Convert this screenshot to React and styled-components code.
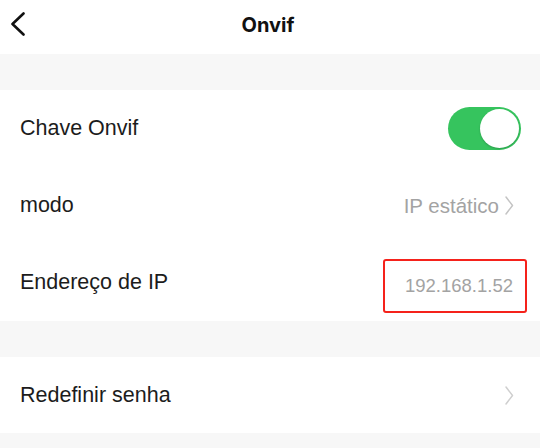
import React from 'react';
import styled, { createGlobalStyle } from 'styled-components';

const GlobalStyle = createGlobalStyle`
  body {
    margin: 0;
    background: #f7f7f7;
    font-family: "Liberation Sans", Arial, sans-serif;
  }
`;

const Chevron = ({ color = '#c4c4c4', w = 9, h = 19, stroke = 1.5, left }) => (
  <svg width={w} height={h} viewBox={`0 0 ${w} ${h}`} fill="none">
    <path
      d={left ? `M${w - 1.5} 1.5 L1.5 ${h / 2} L${w - 1.5} ${h - 1.5}` : `M1 1 L${w - 1.5} ${h / 2} L1 ${h - 1}`}
      stroke={color}
      strokeWidth={stroke}
      strokeLinecap="round"
      strokeLinejoin="round"
    />
  </svg>
);

const App = () => {
  return (
    <Page>
      <GlobalStyle />
      <Header>
        <BackButton>
          <Chevron left color="#111" w={14} h={24} stroke={2.6} />
        </BackButton>
        <Title>Onvif</Title>
      </Header>
      <Gap />
      <Section>
        <Row>
          <Label>Chave Onvif</Label>
          <Toggle>
            <Knob />
          </Toggle>
        </Row>
        <Row>
          <Label>modo</Label>
          <Value>
            IP estático
            <Chevron />
          </Value>
        </Row>
        <Row>
          <Label>Endereço de IP</Label>
          <Highlight>192.168.1.52</Highlight>
        </Row>
      </Section>
      <Gap $h={36} />
      <Section>
        <Row $h={76}>
          <Label>Redefinir senha</Label>
          <Value>
            <Chevron color="#cfcfcf" />
          </Value>
        </Row>
      </Section>
    </Page>
  );
};

const Page = styled.div`
  width: 540px;
  height: 448px;
  overflow: hidden;
  background: #f7f7f7;
`;

const Header = styled.div`
  position: relative;
  height: 54px;
  background: #fff;
  display: flex;
  align-items: center;
  justify-content: center;
`;

const BackButton = styled.div`
  position: absolute;
  left: 11px;
  top: 12px;
  display: flex;
`;

const Title = styled.div`
  font-family: Inter, "Liberation Sans", sans-serif;
  font-weight: 700;
  font-size: 20px;
  color: #111;
  margin-top: -4px;
  margin-left: -4px;
`;

const Gap = styled.div`
  height: ${(p) => p.$h || 36}px;
  background: #f7f7f7;
`;

const Section = styled.div`
  background: #fff;
`;

const Row = styled.div`
  height: ${(p) => p.$h || 77}px;
  display: flex;
  align-items: center;
  justify-content: space-between;
  padding: 0 20px;
`;

const Label = styled.div`
  font-size: 21.5px;
  color: #1c1c1c;
`;

const Value = styled.div`
  display: flex;
  align-items: center;
  gap: 6px;
  font-size: 20.5px;
  color: #a3a3a3;
  margin-right: 6px;
`;

const Toggle = styled.div`
  width: 73px;
  height: 43px;
  border-radius: 22px;
  background: #36c45e;
  display: flex;
  align-items: center;
  justify-content: flex-end;
  padding: 0 2px;
  box-sizing: border-box;
  margin-right: -1px;
`;

const Knob = styled.div`
  width: 39px;
  height: 39px;
  border-radius: 50%;
  background: #fff;
  box-shadow: 0 1px 2px rgba(0, 0, 0, 0.2);
`;

const Highlight = styled.div`
  width: 144px;
  height: 54px;
  box-sizing: border-box;
  border: 2px solid #f5221b;
  border-radius: 3px;
  display: flex;
  align-items: center;
  justify-content: flex-end;
  padding-right: 12px;
  font-size: 18.5px;
  color: #a3a3a3;
  margin-right: -7px;
  margin-top: 7px;
`;

export default App;
